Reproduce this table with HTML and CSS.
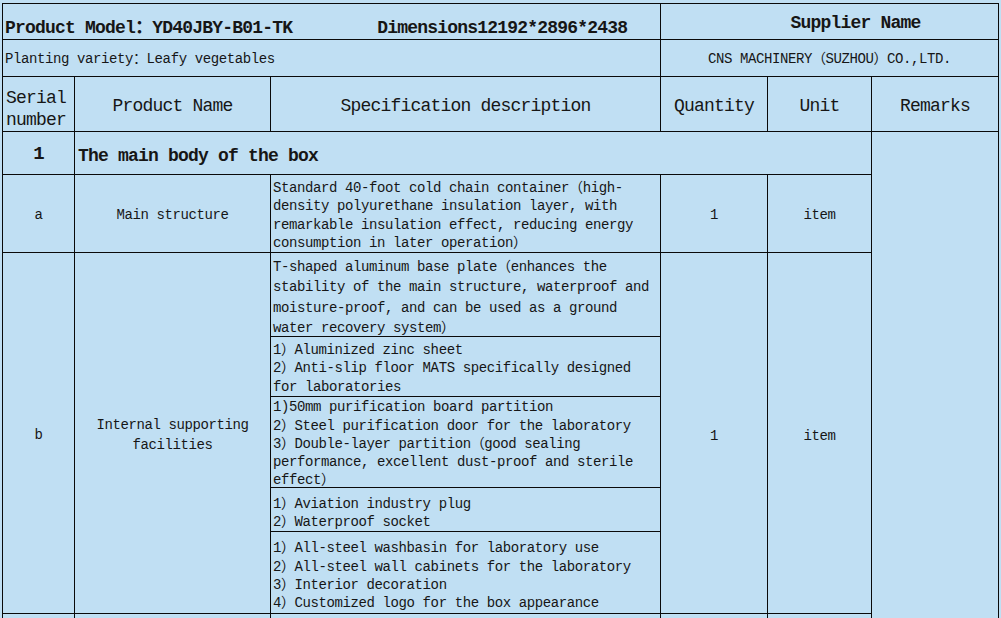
FILE: index.html
```html
<!DOCTYPE html>
<html lang="en">
<head>
<meta charset="utf-8">
<title>Product Specification</title>
<link rel="stylesheet" href="styles.css">
</head>
<body>
<div class="sheet">
  <div class="c title"><span class="model">Product Model：YD40JBY-B01-TK</span><span class="dims">Dimensions12192*2896*2438</span></div>
  <div class="c supplier">Supplier Name</div>

  <div class="c variety">Planting variety：Leafy vegetables</div>
  <div class="c company">CNS MACHINERY（SUZHOU）CO.,LTD.</div>

  <div class="c head serial">Serial<br>number</div>
  <div class="c head">Product Name</div>
  <div class="c head">Specification description</div>
  <div class="c head">Quantity</div>
  <div class="c head">Unit</div>
  <div class="c head">Remarks</div>

  <div class="c section-no">1</div>
  <div class="c section">The main body of the box</div>
  <div class="c remarks"></div>

  <div class="c body">a</div>
  <div class="c body">Main structure</div>
  <div class="c spec">Standard 40-foot cold chain container（high-<br>density polyurethane insulation layer, with<br>remarkable insulation effect, reducing energy<br>consumption in later operation）</div>
  <div class="c body">1</div>
  <div class="c body">item</div>

  <div class="c body span5">b</div>
  <div class="c body span5 name">Internal supporting<br>facilities</div>
  <div class="c spec spec-wide">T-shaped aluminum base plate（enhances the<br>stability of the main structure, waterproof and<br>moisture-proof, and can be used as a ground<br>water recovery system）</div>
  <div class="c body span5 qty">1</div>
  <div class="c body span5 qty">item</div>
  <div class="c spec">1）Aluminized zinc sheet<br>2）Anti-slip floor MATS specifically designed<br>for laboratories</div>
  <div class="c spec">1)50mm purification board partition<br>2）Steel purification door for the laboratory<br>3）Double-layer partition（good sealing<br>performance, excellent dust-proof and sterile<br>effect）</div>
  <div class="c spec spec-low">1）Aviation industry plug<br>2）Waterproof socket</div>
  <div class="c spec spec-low">1）All-steel washbasin for laboratory use<br>2）All-steel wall cabinets for the laboratory<br>3）Interior decoration<br>4）Customized logo for the box appearance</div>

  <div class="c"></div>
  <div class="c"></div>
  <div class="c"></div>
  <div class="c"></div>
  <div class="c"></div>
</div>
</body>
</html>
```

FILE: styles.css
```css
:root {
  --bg: #c0dff3;
  --ink: #161616;
  --line: #0a0a0a;
}

html, body {
  margin: 0;
  padding: 0;
  background: var(--bg);
  overflow: hidden;
}

body {
  font-family: "Liberation Mono", "Noto Sans CJK SC", monospace;
  color: var(--ink);
}

.sheet {
  display: grid;
  grid-template-columns: 71px 195px 389px 106px 103px 126px;
  grid-template-rows: 35px 36px 54px 42px 77px 83px 59px 90px 43px 81px 40px;
  gap: 1px;
  background: var(--line);
  border: 1px solid var(--line);
  width: max-content;
  margin: 3px 0 0 2px;
}

.c {
  background: var(--bg);
  display: flex;
  align-items: center;
  justify-content: center;
  text-align: center;
  white-space: nowrap;
  font-size: 14px;
  letter-spacing: -0.4px;
  line-height: 18.3px;
  overflow: hidden;
}

.title {
  grid-column: span 3;
  justify-content: flex-start;
  align-items: flex-end;
  padding: 0 0 0 2px;
  font-weight: bold;
  font-size: 18px;
  letter-spacing: -0.8px;
  line-height: 22px;
  gap: 85px;
}

.supplier {
  grid-column: span 3;
  padding-left: 52px;
  padding-top: 3px;
  font-weight: bold;
  font-size: 18px;
  letter-spacing: -0.8px;
}

.variety {
  grid-column: span 3;
  justify-content: flex-start;
  padding: 3px 0 0 2px;
}

.company {
  grid-column: span 3;
  padding-top: 3px;
}

.head {
  font-size: 18px;
  letter-spacing: -0.8px;
  line-height: 22px;
  padding-top: 3px;
}

.serial {
  justify-content: flex-start;
  text-align: left;
  padding-left: 3px;
  padding-top: 9px;
}

.section-no {
  font-weight: bold;
  font-size: 19px;
  letter-spacing: -0.8px;
  padding-top: 2px;
}

.section {
  grid-column: span 4;
  justify-content: flex-start;
  padding: 7px 0 0 3px;
  font-weight: bold;
  font-size: 18px;
  letter-spacing: -0.8px;
}

.remarks {
  grid-row: span 8;
}

.body {
  padding-top: 4px;
}

.span5 {
  grid-row: span 5;
}

.name {
  line-height: 20px;
}

.qty {
  padding-top: 6px;
}

.spec {
  justify-content: flex-start;
  text-align: left;
  padding: 4px 0 0 2px;
}

.spec-wide {
  line-height: 20.4px;
  padding-top: 6px;
}

.spec-low {
  padding-top: 7px;
}
```
